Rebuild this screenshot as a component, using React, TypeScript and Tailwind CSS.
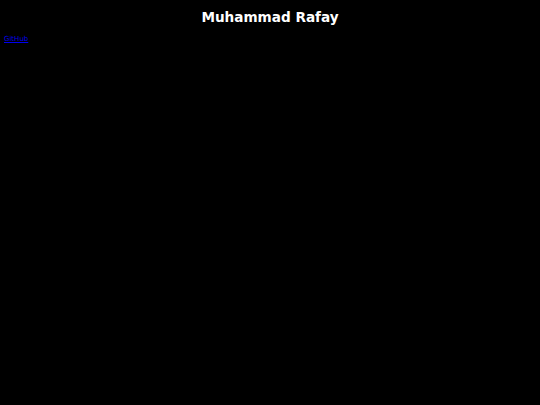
export default function App() {
  return (
    <div className="min-h-[405px] w-full bg-black font-['DejaVu_Sans',sans-serif]">
      <h1 className="pt-[9px] text-center text-[13.6px] font-bold leading-[17px] text-white">Muhammad Rafay</h1>
      <div className="px-1 pt-[9px] text-[7px] leading-[8px]">
        <a href="#" className="text-[#0000ee] underline">GitHub</a>
      </div>
    </div>
  );
}
